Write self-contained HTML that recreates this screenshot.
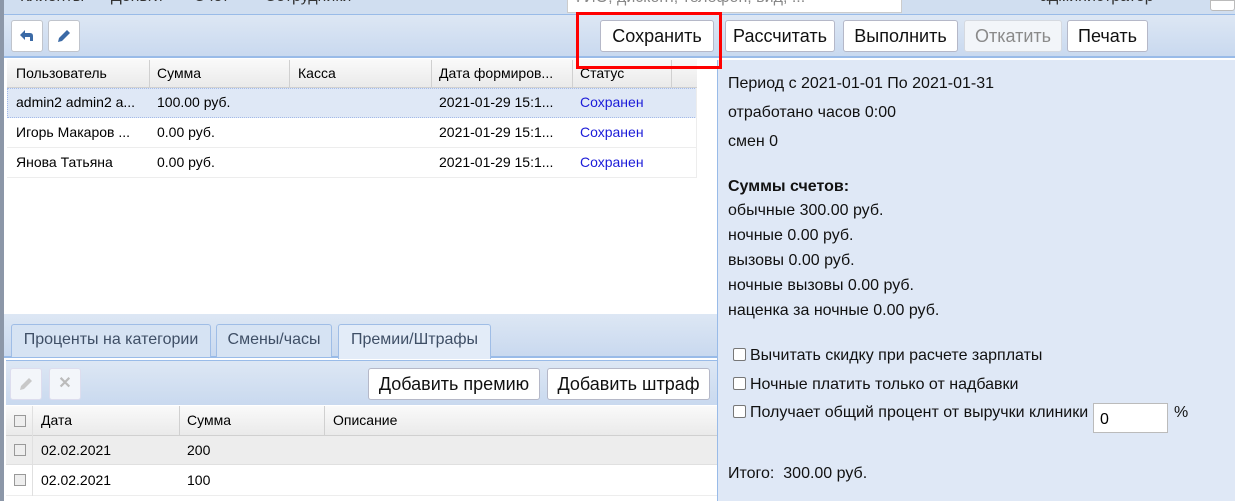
<!DOCTYPE html>
<html><head><meta charset="utf-8"><style>
*{box-sizing:border-box;margin:0;padding:0}
body{width:1235px;height:501px;overflow:hidden;position:relative;background:#fff;font-family:"Liberation Sans",Arial,sans-serif;color:#000}
.a{position:absolute}
.btn{position:absolute;height:32px;background:#fff;border:1px solid #b5b8c8;border-radius:3px;font-size:18px;line-height:30px;text-align:center;color:#111;white-space:nowrap}
.ib{position:absolute;width:32px;height:32px;background:#fff;border:1px solid #c0c4cc;border-radius:3px}
.tb{background:linear-gradient(#dde7f4,#c9d9ef)}
.cell{position:absolute;font-size:14px;white-space:nowrap}
.rt{position:absolute;left:728px;font-size:16px;color:#111;white-space:nowrap}
.cb{display:inline-block;width:13px;height:13px;border:1px solid #777;border-radius:2px;background:#fff;vertical-align:-1px;margin-right:4px}
.gcb{position:absolute;width:12px;height:12px;border:1px solid #999;background:#eee}
.tab{position:absolute;top:324px;height:33px;background:#d6e3f3;border:1px solid #9fbde6;border-bottom:none;border-radius:3px 3px 0 0;font-size:16px;color:#3f4f66;text-align:center;line-height:30px;white-space:nowrap}
</style></head><body>
<div class="a" style="left:0;top:0;width:1235px;height:15px;background:#d0def0;border-bottom:1px solid #99bbe8;overflow:hidden">
<div class="a" style="left:20px;top:-12px;font-size:16px;color:#333;white-space:nowrap">Клиенты&nbsp;&nbsp;&nbsp;&nbsp;&nbsp; Деньги&nbsp;&nbsp;&nbsp;&nbsp;&nbsp;&nbsp; Счет&nbsp;&nbsp;&nbsp;&nbsp;&nbsp;&nbsp;&nbsp; Сотрудники</div>
<div class="a" style="left:1040px;top:-12px;font-size:16px;color:#333">администратор</div>
</div>
<div class="a" style="left:0;top:0;width:4px;height:501px;background:#8c97a8"></div>
<div class="a" style="left:567px;top:0;width:335px;height:13px;background:#fff;border:1px solid #ccc;border-top:none;overflow:hidden"><div class="a" style="left:4px;top:-11px;font-size:16px;color:#888;white-space:nowrap">ФИО, дисконт, телефон, вид, ...</div></div>
<div class="a" style="left:1210px;top:0;width:25px;height:11px;background:#fff;border:1px solid #bbb;border-radius:0 0 3px 3px"></div>
<div class="a tb" style="left:4px;top:15px;width:1231px;height:43px;border-bottom:2px solid #99bbe8"></div>
<div class="ib" style="left:11px;top:20px"><svg width="30" height="30" viewBox="0 0 30 30"><path d="M8 14 L13 9 V12 H18 Q21 12 21 15 V20 H18 V16 H13 V19 Z" fill="#3b6aa6"/></svg></div>
<div class="ib" style="left:48px;top:20px"><svg width="30" height="30" viewBox="0 0 30 30"><path d="M9 21 L10 17 L18 9 L21 12 L13 20 Z" fill="#3b6aa6"/></svg></div>
<div class="btn" style="left:600px;top:20px;width:114px">Сохранить</div>
<div class="btn" style="left:725px;top:20px;width:110px">Рассчитать</div>
<div class="btn" style="left:843px;top:20px;width:115px">Выполнить</div>
<div class="btn" style="left:964px;top:20px;width:98px;color:#8a8a8a;background:#f2f5f9;border-color:#d5d9e0">Откатить</div>
<div class="btn" style="left:1067px;top:20px;width:81px">Печать</div>
<div class="a" style="left:7px;top:59px;width:690px;height:29px;background:linear-gradient(#fafafa,#eaeaea);border-bottom:1px solid #d0d0d0"></div>
<div class="a" style="left:149px;top:60px;width:1px;height:27px;background:#d0d0d0"></div>
<div class="a" style="left:289px;top:60px;width:1px;height:27px;background:#d0d0d0"></div>
<div class="a" style="left:431px;top:60px;width:1px;height:27px;background:#d0d0d0"></div>
<div class="a" style="left:572px;top:60px;width:1px;height:27px;background:#d0d0d0"></div>
<div class="a" style="left:671px;top:60px;width:1px;height:27px;background:#d0d0d0"></div>
<div class="cell" style="left:16px;top:65px">Пользователь</div>
<div class="cell" style="left:157px;top:65px">Сумма</div>
<div class="cell" style="left:298px;top:65px">Касса</div>
<div class="cell" style="left:439px;top:65px">Дата формиров...</div>
<div class="cell" style="left:580px;top:65px">Статус</div>
<div class="a" style="left:7px;top:88px;width:690px;height:30px;background:#dfe8f6;border:1px dotted #a3bae9"></div>
<div class="a" style="left:7px;top:147px;width:690px;height:1px;background:#ededed"></div>
<div class="a" style="left:7px;top:177px;width:690px;height:1px;background:#ededed"></div>
<div class="a" style="left:696px;top:88px;width:1px;height:90px;background:#ededed"></div>
<div class="cell" style="left:16px;top:94px">admin2 admin2 a...</div><div class="cell" style="left:157px;top:94px">100.00 руб.</div><div class="cell" style="left:439px;top:94px">2021-01-29 15:1...</div><div class="cell" style="left:580px;top:94px;color:#1b1bd9">Сохранен</div>
<div class="cell" style="left:16px;top:124px">Игорь Макаров ...</div><div class="cell" style="left:157px;top:124px">0.00 руб.</div><div class="cell" style="left:439px;top:124px">2021-01-29 15:1...</div><div class="cell" style="left:580px;top:124px;color:#1b1bd9">Сохранен</div>
<div class="cell" style="left:16px;top:154px">Янова Татьяна</div><div class="cell" style="left:157px;top:154px">0.00 руб.</div><div class="cell" style="left:439px;top:154px">2021-01-29 15:1...</div><div class="cell" style="left:580px;top:154px;color:#1b1bd9">Сохранен</div>
<div class="a tb" style="left:4px;top:314px;width:713px;height:44px;border-bottom:2px solid #99bbe8"></div>
<div class="tab" style="left:11px;width:200px">Проценты на категории</div>
<div class="tab" style="left:216px;width:116px">Смены/часы</div>
<div class="tab" style="left:338px;width:153px;height:35px;background:#e3ecf8">Премии/Штрафы</div>
<div class="a tb" style="left:6px;top:360px;width:711px;height:45px;border-top:1px solid #99bbe8"></div>
<div class="ib" style="left:10px;top:368px;border-color:#dde;background:#f3f6fa"><svg width="30" height="30" viewBox="0 0 30 30"><path d="M9 21 L10 17 L18 9 L21 12 L13 20 Z" fill="#c8c8c8"/></svg></div>
<div class="ib" style="left:49px;top:368px;border-color:#dde;background:#f3f6fa;color:#bbb;font-size:16px;text-align:center;line-height:30px;font-weight:bold">✕</div>
<div class="btn" style="left:368px;top:368px;width:172px">Добавить премию</div>
<div class="btn" style="left:547px;top:368px;width:163px">Добавить штраф</div>
<div class="a" style="left:6px;top:406px;width:711px;height:30px;background:linear-gradient(#fafafa,#eaeaea);border-bottom:1px solid #d0d0d0"></div>
<div class="a" style="left:6px;top:436px;width:711px;height:29px;background:#ededed;border-bottom:1px solid #e0e0e0"></div>
<div class="a" style="left:6px;top:495px;width:711px;height:1px;background:#ededed"></div>
<div class="a" style="left:32px;top:406px;width:1px;height:90px;background:#e0e0e0"></div>
<div class="a" style="left:179px;top:406px;width:1px;height:30px;background:#d0d0d0"></div>
<div class="a" style="left:324px;top:406px;width:1px;height:30px;background:#d0d0d0"></div>
<div class="gcb" style="left:14px;top:415px"></div><div class="gcb" style="left:14px;top:444px"></div><div class="gcb" style="left:14px;top:474px"></div>
<div class="cell" style="left:41px;top:412px">Дата</div><div class="cell" style="left:187px;top:412px">Сумма</div><div class="cell" style="left:333px;top:412px">Описание</div>
<div class="cell" style="left:41px;top:442px">02.02.2021</div><div class="cell" style="left:187px;top:442px">200</div>
<div class="cell" style="left:41px;top:472px">02.02.2021</div><div class="cell" style="left:187px;top:472px">100</div>
<div class="a" style="left:717px;top:60px;width:518px;height:441px;background:#dfe8f6;border-left:1px solid #99bbe8"></div>
<div class="rt" style="top:75px">Период с 2021-01-01 По 2021-01-31</div>
<div class="rt" style="top:104px">отработано часов 0:00</div>
<div class="rt" style="top:133px">смен 0</div>
<div class="rt" style="top:178px;font-weight:bold">Суммы счетов:</div>
<div class="rt" style="top:202px">обычные 300.00 руб.</div>
<div class="rt" style="top:227px">ночные 0.00 руб.</div>
<div class="rt" style="top:252px">вызовы 0.00 руб.</div>
<div class="rt" style="top:277px">ночные вызовы 0.00 руб.</div>
<div class="rt" style="top:302px">наценка за ночные 0.00 руб.</div>
<div class="rt" style="top:347px;left:733px"><span class="cb"></span>Вычитать скидку при расчете зарплаты</div>
<div class="rt" style="top:376px;left:733px"><span class="cb"></span>Ночные платить только от надбавки</div>
<div class="rt" style="top:404px;left:733px"><span class="cb"></span>Получает общий процент от выручки клиники</div>
<div class="a" style="left:1093px;top:403px;width:75px;height:30px;background:#fff;border:1px solid #bbb;font-size:16px;padding:7px 0 0 6px">0</div>
<div class="rt" style="top:404px;left:1174px">%</div>
<div class="rt" style="top:465px">Итого:&nbsp; 300.00 руб.</div>
<div class="a" style="left:576px;top:12px;width:146px;height:57px;border:3px solid #f00"></div>
</body></html>
